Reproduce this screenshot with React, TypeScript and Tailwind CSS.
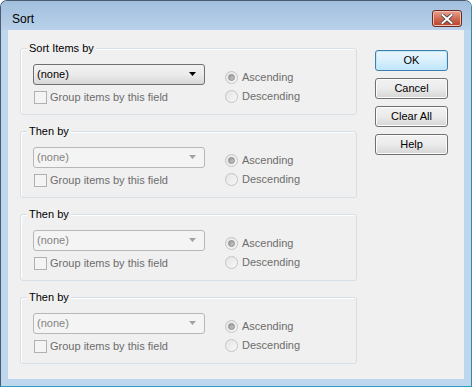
import React from 'react';

const font = { fontFamily: '"Liberation Sans", Arial, sans-serif' };

function Combo({ enabled }: { enabled: boolean }) {
    return (
        <div
            className={
                enabled
                    ? "flex items-center h-[21px] w-[172px] rounded-[3px] border border-[#707070] bg-gradient-to-b from-[#f2f2f2] via-[#ebebeb] to-[#d8d8d8] pl-[3px] pr-[4px] text-black"
                    : "flex items-center h-[21px] w-[172px] rounded-[3px] border border-[#b5b8bb] bg-[#f4f4f4] pl-[3px] pr-[4px] text-[#838383]"
            }
        >
            <span className="flex-1 leading-none">(none)</span>
            <svg width="8" height="5" viewBox="0 0 8 5" className="mr-[3px]">
                <path d="M0 0 H7 L3.5 4 Z" fill={enabled ? '#000' : '#a2a2a2'} />
            </svg>
        </div>
    );
}

function Radio({ checked, label }: { checked: boolean; label: string }) {
    return (
        <div className="flex items-center h-[19px]">
            <div className="flex items-center justify-center w-[13px] h-[13px] rounded-full border border-[#c4c4c4] bg-gradient-to-br from-[#e4e4e4] to-[#f8f8f8]">
                {checked && <div className="w-[7px] h-[7px] rounded-full bg-gradient-to-br from-[#9a9a9a] to-[#c8c8c8] border border-[#8a8a8a]" />}
            </div>
            <span className="ml-[4px] text-[#6d6d6d]">{label}</span>
        </div>
    );
}

function Group({ title, enabled }: { title: string; enabled: boolean }) {
    return (
        <div className="relative w-[337px] h-[67px] rounded-[3px] border border-[#d5dfe5] shadow-[inset_1px_1px_0_#ffffff]">
            <span className="absolute left-[6px] top-[-8px] px-[2px] bg-[#f0f0f0] leading-[14px] text-black">{title}</span>
            <div className="flex pl-[12px] pt-[15px]">
                <div className="flex flex-col">
                    <Combo enabled={enabled} />
                    <div className="flex items-center mt-[6px] ml-[1px] h-[13px]">
                        <div className="w-[13px] h-[13px] border border-[#b1b1b1] bg-[#f4f4f4]" />
                        <span className="ml-[3px] text-[#6d6d6d]">Group items by this field</span>
                    </div>
                </div>
                <div className="flex flex-col ml-[20px] pt-[4px]">
                    <Radio checked label="Ascending" />
                    <Radio checked={false} label="Descending" />
                </div>
            </div>
        </div>
    );
}

function DlgButton({ label, isDefault }: { label: string; isDefault?: boolean }) {
    return (
        <div
            className={
                isDefault
                    ? "flex items-center justify-center w-[73px] h-[21px] rounded-[3px] border border-[#3c7fb1] bg-gradient-to-b from-[#eaf6fd] via-[#d9f0fc] to-[#bee6fd] shadow-[inset_0_0_0_1px_#c4e5f6] text-black"
                    : "flex items-center justify-center w-[73px] h-[21px] rounded-[3px] border border-[#707070] bg-gradient-to-b from-[#f2f2f2] via-[#ebebeb] to-[#d5d5d5] shadow-[inset_0_0_0_1px_#fcfcfc] text-black"
            }
        >
            {label}
        </div>
    );
}

export default function App() {
    return (
        <div
            className="flex flex-col w-[472px] h-[387px] rounded-t-[7px] border border-[#4a5d70] border-b-[#2f9fc0] border-r-[#3d86a6] bg-[#bed6ee] text-[11px] select-none"
            style={font}
        >
            {/* Title bar */}
            <div className="flex items-start justify-between h-[29px] pl-[11px] pr-[9px] rounded-t-[6px] bg-gradient-to-b from-[#a1bfdd] to-[#b9d1ea]">
                <span className="pt-[11px] text-[12px] leading-[14px] text-black">Sort</span>
                <div className="mt-[9px] flex items-center justify-center w-[30px] h-[17px] rounded-[3px] border border-[#6b2a22] bg-gradient-to-b from-[#e8a493] via-[#cf6b55] to-[#b8402c] shadow-[inset_0_0_0_1px_#eec0b4]">
                    <svg width="12" height="10" viewBox="0 0 12 10">
                        <path d="M1.5 1 L10.5 9 M10.5 1 L1.5 9" stroke="#404040" strokeWidth="3.6" strokeLinecap="square" />
                        <path d="M1.5 1 L10.5 9 M10.5 1 L1.5 9" stroke="#ffffff" strokeWidth="2" strokeLinecap="square" />
                    </svg>
                </div>
            </div>

            {/* Client area */}
            <div className="flex mx-[7px] h-[349px] bg-[#f0f0f0]">
                <div className="flex flex-col gap-[16px] pl-[12px] pt-[18px]">
                    <Group title="Sort Items by" enabled />
                    <Group title="Then by" enabled={false} />
                    <Group title="Then by" enabled={false} />
                    <Group title="Then by" enabled={false} />
                </div>
                <div className="flex flex-col gap-[7px] ml-[18px] pt-[20px]">
                    <DlgButton label="OK" isDefault />
                    <DlgButton label="Cancel" />
                    <DlgButton label="Clear All" />
                    <DlgButton label="Help" />
                </div>
            </div>
        </div>
    );
}
